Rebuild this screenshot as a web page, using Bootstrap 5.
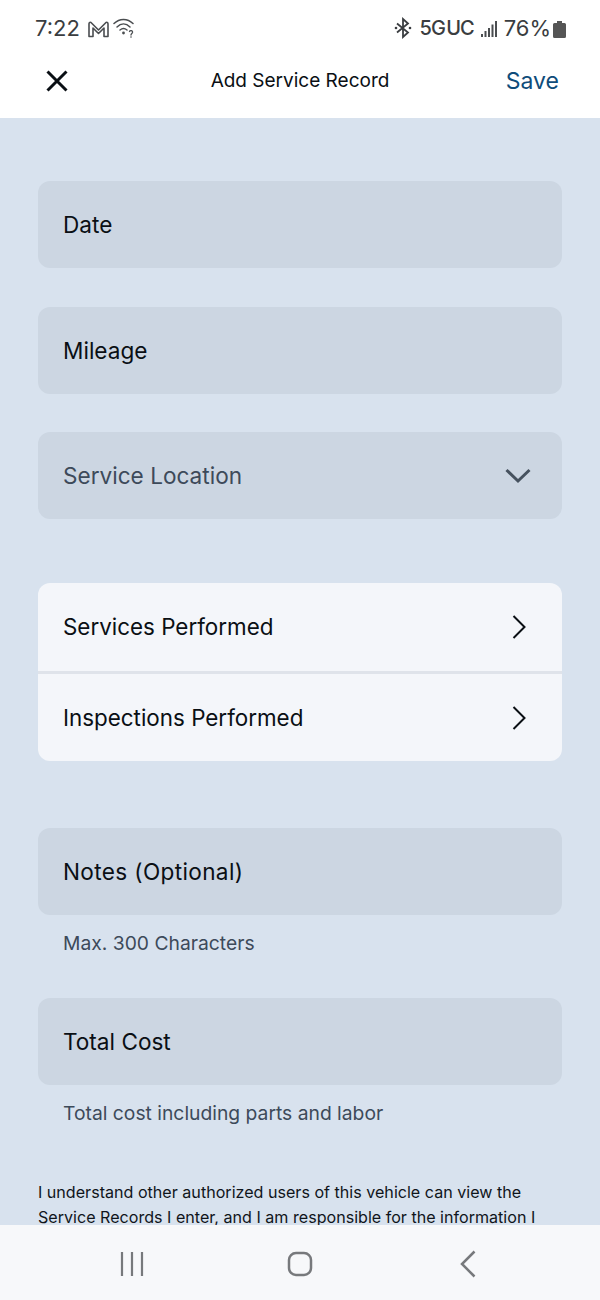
<!DOCTYPE html>
<html lang="en">
<head>
  <meta charset="UTF-8" />
  <meta name="viewport" content="width=device-width, initial-scale=1" />
  <title>Add Service Record</title>
  <link href="https://cdn.jsdelivr.net/npm/bootstrap@5.3.2/dist/css/bootstrap.min.css" rel="stylesheet" />
  <style>
    html, body { height: 1300px; overflow: hidden; }
    body { font-family: Inter, "Liberation Sans", sans-serif; background: #fff; color: #0a0f14; }
    .phone { height: 1300px; }
    .status-bar { height: 46px; padding: 13px 34px 0 35px; color: #3a3d40; font-size: 22px; line-height: 30px; }
    .status-bar svg { display: block; }
    .ucase { font-size: 20px; font-weight: 500; letter-spacing: -1px; word-spacing: -3px; }
    .signal-icon { margin: 8px 7px 0 7px; }
    .app-bar { height: 72px; padding: 0 41px 2px 44px; }
    .app-title { font-size: 19px; left: 0; right: 0; top: 0; bottom: 2px; pointer-events: none; }
    .save-link { font-size: 23px; color: #0f4c7a; text-decoration: none; }
    .content { background: #d8e2ee; padding: 63px 38px 0; min-height: 0; overflow: hidden; }
    .field-box { height: 87px; background: #ccd6e2; border-radius: 12px; padding: 0 25px; font-size: 22.6px; line-height: 30px; }
    .field-gap { margin-bottom: 39px; }
    .field-gap-tight { margin-bottom: 38px; }
    .field-muted { color: #3d4a5a; }
    .chevron-down { margin-right: 6px; }
    .chevron-right { margin-right: 11px; }
    .link-group { background: #f4f6fa; border-radius: 12px; margin: 64px 0 67px; overflow: hidden; }
    .link-row { height: 88px; padding: 0 25px; font-size: 22.4px; }
    .link-row + .link-row { height: 90px; border-top: 3px solid #dfe3ea; }
    .notes-text { letter-spacing: .35px; }
    .hint { color: #3d4a5a; font-size: 19.3px; line-height: 26px; padding: 15px 25px 0; height: 83px; }
    .hint-last { height: 95px; }
    .legal { font-size: 16.1px; line-height: 25px; color: #10151b; margin: 0; }
    .nav-bar { height: 75px; background: #f7f8fa; padding-top: 2px; padding-left: 5px; }
    .nav-slot { width: 40px; }
    .time-text { margin-right: 4px; }
    .wifi-icon { margin-top: 3px; }
    .batt-icon { color: #555; margin: 8px 0 0 2px; }
  </style>
</head>
<body>
  <div class="phone d-flex flex-column">
    <div class="status-bar d-flex justify-content-between flex-shrink-0">
      <div class="d-flex align-items-start gap-1">
        <span class="time-text">7:22</span>
        <svg class="mt-2" width="21" height="17" viewBox="0 0 21 17" fill="none" stroke="#4a4d50" stroke-width="1.600">
          <path d="M1 15.500V3Q1 .8 3 1.500L10.500 9L18 1.500Q20 .8 20 3V15.500H16V7L10.500 12.500L5 7V15.500Z" stroke-linejoin="round" />
        </svg>
        <svg class="wifi-icon" width="22" height="22" viewBox="0 0 22 22" fill="none" stroke="#4a4d50" stroke-width="1.500" stroke-linecap="round">
          <path d="M1 7.500C6.500 2 14.500 2 20 7.500" />
          <path d="M4 11C8 7 13 7 17 11" />
          <path d="M7 14C9.500 12 11.500 12 14 14" />
          <circle cx="10.500" cy="17" r="1.400" fill="#4a4d50" stroke="none" />
          <path d="M16.500 15.500C17 14 20 14.500 19.500 16.500C19.200 17.500 18 17.500 18 19" stroke-width="1.300" />
          <circle cx="18" cy="21" r=".8" fill="#4a4d50" stroke="none" />
        </svg>
      </div>
      <div class="d-flex align-items-start">
        <svg class="mt-1 me-2" width="18" height="22" viewBox="0 0 18 22" fill="none" stroke="#3a3d40" stroke-width="1.800">
          <path d="M3 6.500L14 15.500L9 20V2L14 6.500L3 15.500" />
          <circle cx="2" cy="11" r="1.300" fill="#3a3d40" stroke="none" />
          <circle cx="16" cy="11" r="1.300" fill="#3a3d40" stroke="none" />
        </svg>
        <span class="ucase">5G UC</span>
        <svg class="signal-icon" width="16" height="17" viewBox="0 0 16 17" fill="#4a4d50">
          <rect x="0" y="13" width="2" height="3" />
          <rect x="3.500" y="10" width="2" height="6" />
          <rect x="7" y="7" width="2" height="9" />
          <rect x="10.500" y="3.500" width="2" height="12.500" />
          <rect x="14" y="0" width="2" height="16" />
        </svg>
        <span>76%</span>
        <svg class="batt-icon" width="13" height="17" viewBox="0 0 13 17" fill="currentColor">
          <path d="M4 0H9V2H11.500Q13 2 13 3.500V15.500Q13 17 11.500 17H1.500Q0 17 0 15.500V3.500Q0 2 1.500 2H4Z" />
        </svg>
      </div>
    </div>

    <div class="app-bar position-relative d-flex justify-content-between align-items-center flex-shrink-0">
      <svg width="26" height="26" viewBox="0 0 26 26" fill="none" stroke="#0a0f14" stroke-width="3">
        <path d="M3.500 3.500L22.500 22.500M22.500 3.500L3.500 22.500" />
      </svg>
      <div class="app-title position-absolute d-flex justify-content-center align-items-center">Add Service Record</div>
      <a href="#" class="save-link">Save</a>
    </div>

    <div class="content flex-grow-1">
      <div class="field-box field-gap d-flex align-items-center">Date</div>
      <div class="field-box field-gap-tight d-flex align-items-center">Mileage</div>
      <div class="field-box field-muted d-flex justify-content-between align-items-center">
        <span>Service Location</span>
        <svg class="chevron-down" width="26" height="16" viewBox="0 0 26 16" fill="none" stroke="#46525f" stroke-width="3">
          <path d="M1.500 2L13 13L24.500 2" />
        </svg>
      </div>

      <div class="link-group">
        <div class="link-row d-flex justify-content-between align-items-center">
          <span>Services Performed</span>
          <svg class="chevron-right" width="14" height="24" viewBox="0 0 14 24" fill="none" stroke="#0a0f14" stroke-width="2">
            <path d="M1.500 1L12.500 12L1.500 23" />
          </svg>
        </div>
        <div class="link-row d-flex justify-content-between align-items-center">
          <span>Inspections Performed</span>
          <svg class="chevron-right" width="14" height="24" viewBox="0 0 14 24" fill="none" stroke="#0a0f14" stroke-width="2">
            <path d="M1.500 1L12.500 12L1.500 23" />
          </svg>
        </div>
      </div>

      <div class="field-box d-flex align-items-center"><span class="notes-text">Notes (Optional)</span></div>
      <div class="hint">Max. 300 Characters</div>
      <div class="field-box d-flex align-items-center">Total Cost</div>
      <div class="hint hint-last">Total cost including parts and labor</div>
      <p class="legal">I understand other authorized users of this vehicle can view the Service Records I enter, and I am responsible for the information I</p>
    </div>

    <div class="nav-bar d-flex justify-content-around align-items-center flex-shrink-0 px-5">
      <div class="nav-slot d-flex justify-content-center">
        <svg width="24" height="26" viewBox="0 0 24 26" fill="none" stroke="#77797c" stroke-width="2.200">
          <path d="M2 1V25M12 1V25M22 1V25" />
        </svg>
      </div>
      <div class="nav-slot d-flex justify-content-center">
        <svg width="26" height="26" viewBox="0 0 26 26" fill="none" stroke="#77797c" stroke-width="2.500">
          <rect x="2" y="2" width="22" height="22" rx="7" />
        </svg>
      </div>
      <div class="nav-slot d-flex justify-content-center">
        <svg width="16" height="28" viewBox="0 0 16 28" fill="none" stroke="#77797c" stroke-width="2.500">
          <path d="M14.500 1.500L2 14L14.500 26.500" />
        </svg>
      </div>
    </div>
  </div>

  <script src="https://cdn.jsdelivr.net/npm/bootstrap@5.3.2/dist/js/bootstrap.bundle.min.js"></script>
</body>
</html>
